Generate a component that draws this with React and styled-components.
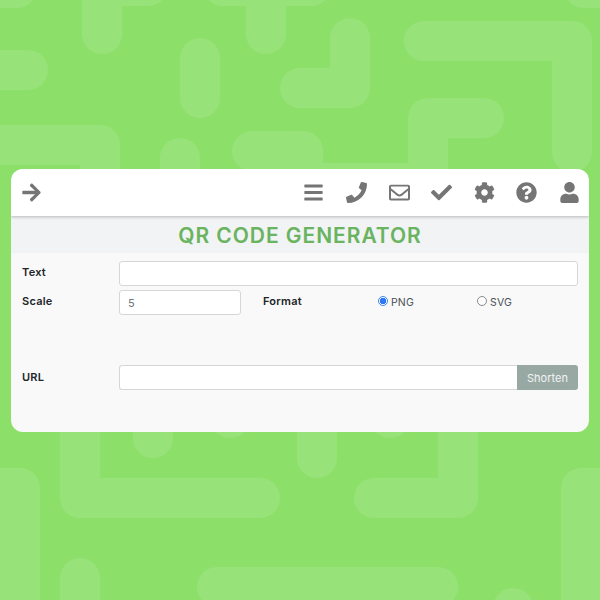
import React from 'react'
import styled, { createGlobalStyle } from 'styled-components'
import {
  FaArrowRight,
  FaBars,
  FaPhone,
  FaRegEnvelope,
  FaCheck,
  FaCog,
  FaQuestionCircle,
  FaUser
} from 'react-icons/fa'

const Global = createGlobalStyle`
  html, body { margin: 0; padding: 0; }
  body { font-family: Inter, "Noto Sans", sans-serif; }
`

const blobs = [
  'M-30,-12 L17,-12',
  'M102,34 L102,-14 L148,-14',
  'M223,-14 L311,-14 M266,-14 L266,34',
  'M350,38 L350,88 L300,88',
  'M200,58 L200,98',
  'M-30,70 L28,70',
  'M424,41 L572,41 L572,152',
  'M584,-12 L640,-12',
  'M252,151 L303,151 L303,183 L428,183 L428,118 L484,118',
  'M-30,145 L100,145 L100,200',
  'M180,158 L180,200',
  'M80,400 L80,498 L260,498',
  'M153,400 L153,438',
  'M230,400 L230,418',
  'M317,400 L317,458',
  'M390,400 L390,418',
  'M458,400 L458,498 L374,498',
  'M-30,488 L20,488 L20,640',
  'M217,587 L438,587',
  'M80,578 L80,640',
  'M513,608 L513,640',
  'M640,488 L581,488 L581,640'
]

const icons = [FaBars, FaPhone, FaRegEnvelope, FaCheck, FaCog, FaQuestionCircle, FaUser]

export default function App() {
  return (
    <Page>
      <Global />
      <Pattern viewBox='0 0 600 600'>
        {blobs.map(d => <path key={d} d={d} />)}
      </Pattern>
      <Card>
        <Header>
          <IconSlot><FaArrowRight /></IconSlot>
          <IconGroup>
            {icons.map((Icon, i) => <IconSlot key={i}><Icon /></IconSlot>)}
          </IconGroup>
        </Header>
        <TitleBand>QR CODE GENERATOR</TitleBand>
        <Body>
          <Row>
            <Label>Text</Label>
            <Input />
          </Row>
          <Row>
            <Label>Scale</Label>
            <ScaleInput defaultValue='5' />
            <FormatLabel>Format</FormatLabel>
            <RadioOption>
              <Radio type='radio' name='format' defaultChecked />
              PNG
            </RadioOption>
            <RadioOption>
              <Radio type='radio' name='format' />
              SVG
            </RadioOption>
          </Row>
          <UrlRow>
            <UrlLabel>URL</UrlLabel>
            <UrlInput />
            <Shorten>Shorten</Shorten>
          </UrlRow>
        </Body>
      </Card>
    </Page>
  )
}

const Page = styled.div`
  position: relative;
  width: 600px;
  height: 600px;
  overflow: hidden;
  background: #8cdf68;
  display: flex;
  flex-direction: column;
  padding: 169px 11px 0;
  box-sizing: border-box;
`
const Pattern = styled.svg`
  position: absolute;
  inset: 0;
  width: 600px;
  height: 600px;

  path {
    fill: none;
    stroke: #98e27a;
    stroke-width: 40;
    stroke-linecap: round;
    stroke-linejoin: round;
  }
`
const Card = styled.div`
  position: relative;
  height: 263px;
  border-radius: 12px;
  overflow: hidden;
  background: #f9f9f9;
  display: flex;
  flex-direction: column;
`
const Header = styled.div`
  position: relative;
  height: 47px;
  flex: none;
  background: #fff;
  box-shadow: 0 1px 3px rgba(0, 0, 0, 0.25);
  display: flex;
  align-items: center;
  justify-content: space-between;
  padding: 0 9px 0 10px;
`
const IconGroup = styled.div`
  display: flex;
  gap: 21.6px;
`
const IconSlot = styled.span`
  width: 21px;
  height: 22px;
  display: flex;
  align-items: center;
  justify-content: center;
  color: #757575;
  font-size: 21px;
`
const TitleBand = styled.div`
  height: 37px;
  flex: none;
  background: #f1f3f5;
  color: #6ab35f;
  font-size: 21px;
  font-weight: 600;
  line-height: 39px;
  text-align: center;
  letter-spacing: 0.95px;
`
const Body = styled.div`
  padding: 8px 11px 0;
  display: flex;
  flex-direction: column;
  gap: 4px;
`
const Row = styled.div`
  display: flex;
  align-items: center;
  height: 25px;
`
const UrlRow = styled(Row)`
  margin-top: 46px;
`
const Label = styled.label`
  width: 97px;
  flex: none;
  font-size: 11px;
  font-weight: 600;
  letter-spacing: 0.25px;
  color: #212529;
  margin-top: -3px;
`
const UrlLabel = styled(Label)`
  margin-top: -1px;
`
const Input = styled.input`
  flex: 1;
  min-width: 0;
  height: 25px;
  box-sizing: border-box;
  border: 1px solid #d6d6d6;
  border-radius: 3px;
  background: #fff;
  outline: none;
  padding: 0 8px;
`
const ScaleInput = styled(Input)`
  flex: none;
  width: 122px;
  font: 11px Inter, sans-serif;
  color: #6c757d;
`
const FormatLabel = styled(Label)`
  width: 115px;
  margin-left: 22px;
`
const RadioOption = styled.label`
  width: 99px;
  display: flex;
  align-items: center;
  gap: 3px;
  font-size: 10.5px;
  letter-spacing: 0.15px;
  color: #495057;
`
const Radio = styled.input`
  appearance: none;
  width: 10px;
  height: 10px;
  box-sizing: border-box;
  margin: -3px 0 0;
  border: 1px solid #8a8a8a;
  border-radius: 50%;
  background: #fff;

  &:checked {
    border-color: #3b82f6;
    background: radial-gradient(circle, #2f78f5 0 3px, #fff 3.5px);
  }
`
const UrlInput = styled(Input)`
  border-radius: 3px 0 0 3px;
  border-right: none;
`
const Shorten = styled.button`
  width: 61px;
  height: 25px;
  flex: none;
  border: none;
  border-radius: 0 3px 3px 0;
  background: #98a8a3;
  color: #f1f3f5;
  font: 11px Inter, sans-serif;
  padding: 0;
`
